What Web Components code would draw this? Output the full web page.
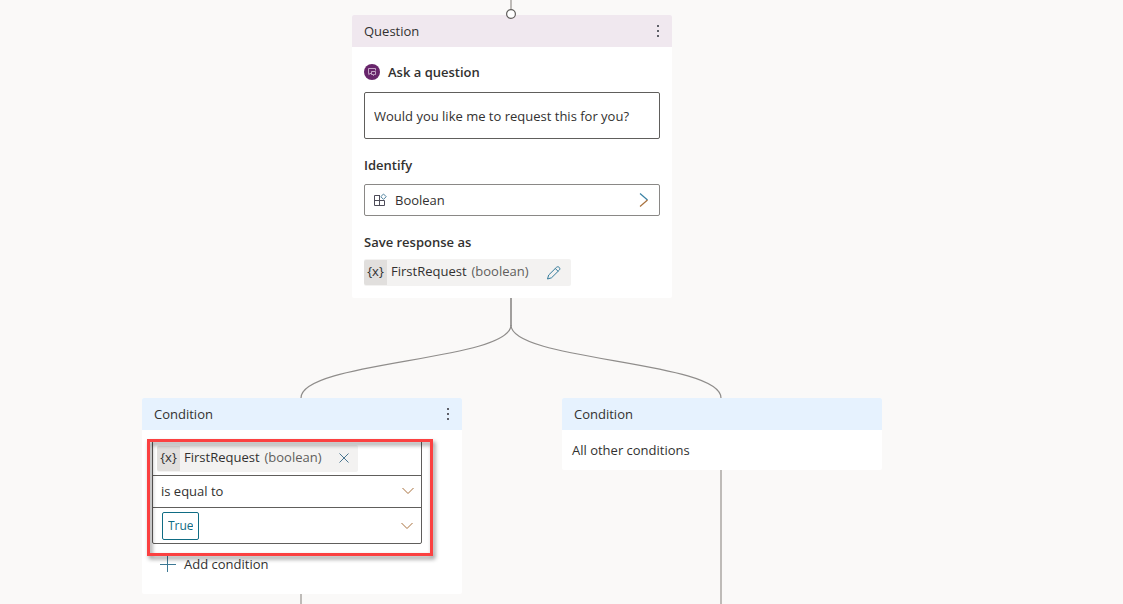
<!DOCTYPE html>
<html lang="en">
<head>
<meta charset="utf-8">
<title>Conversation flow</title>
<style>
body{margin:0;background:#faf9f8;color:#323130;font:13px/20px "Open Sans","Noto Sans",sans-serif}
</style>
</head>
<body>
<flow-canvas></flow-canvas>
<script>
const define=(name,html)=>{
  const t=document.createElement('template');
  t.innerHTML=html;
  customElements.define(name,class extends HTMLElement{
    constructor(){
      super();
      this.attachShadow({mode:'open'}).append(t.content.cloneNode(true));
    }
  });
};

define('flow-node',`
<style>
:host{display:block;width:320px;flex:none;position:relative;background:#fff;border-radius:2px}
header{display:flex;align-items:center;justify-content:space-between;height:32px;padding:0 12px;background:var(--head,#e6f2fe);border-radius:2px 2px 0 0}
h2{margin:0;font:inherit}
button{display:none;width:16px;height:20px;margin-right:-6px;padding:0;border:0;background:none;color:#5f6068}
:host([menu]) button{display:grid;place-items:center}
</style>
<header><h2><slot name="title"></slot></h2>
<button aria-label="More options"><svg width="4" height="14" viewBox="0 0 4 14" fill="currentColor"><rect x="1" y="1" width="2" height="2"/><rect x="1" y="6" width="2" height="2"/><rect x="1" y="11" width="2" height="2"/></svg></button></header>
<slot></slot>`);

define('variable-chip',`
<style>
:host{display:inline-flex;align-items:center;height:27px;background:#f3f2f1;border-radius:2px;vertical-align:top}
.x{box-sizing:border-box;width:23px;height:25px;padding-top:1px;text-align:center;background:#e1dfdd;border-radius:2px 0 0 2px;margin-right:4px}
.name,.type{padding-bottom:3px}
.type{color:#605e5c;margin-left:5px}
::slotted(button){display:grid;place-items:center;width:16px;height:20px;padding:0;border:0;background:none;margin:0 9px 0 17px}
:host([compact]) ::slotted(button){margin:0 6px 0 14px}
</style>
<span class="x">{x}</span><span class="name"><slot></slot></span><span class="type">(boolean)</span><slot name="action"></slot>`);

define('chevron-icon',`
<style>:host{display:block;width:12px;height:12px;pointer-events:none}svg{display:block}</style>
<svg width="12" height="12" viewBox="0 0 12 12" fill="none" stroke="#a8713d"><path d="M.5 3 6 8.5 11.5 3"/></svg>`);

define('question-form',`
<style>
:host{display:block;padding:15px 12px 12px}
label,.label{display:flex;align-items:center;height:20px;gap:8px;font-weight:600}
input{box-sizing:border-box;display:block;width:100%;height:47px;margin:10px 0 16px;padding:0 9px;border:1px solid #605e5c;border-radius:2px;font:inherit;color:inherit;background:#fff}
.pick{box-sizing:border-box;display:flex;align-items:center;width:100%;height:32px;margin:9px 0 16px;padding:0 9px 0 8px;border:1px solid #8a8886;border-radius:2px;font:inherit;color:inherit;background:#fff;text-align:left;gap:8px}
.pick span{flex:1}
variable-chip{margin-top:7px}
svg{display:block}
</style>
<label for="question"><svg width="16" height="16" viewBox="0 0 16 16" fill="none"><circle cx="8" cy="8" r="8" fill="#68256b"/><path d="M7 9.5H6L4.8 10.6V9.5H4.5v-5h7v2M7.500 7.500h4v3h-1L9.500 11.500V10.500h-2Z" stroke="#dcc6dd" stroke-width=".8"/></svg>Ask a question</label>
<input id="question" value="Would you like me to request this for you?">
<label for="entity">Identify</label>
<button class="pick" id="entity"><svg width="14" height="14" viewBox="0 0 14 14" fill="none"><path d="M7 2.500H1.500v10h10V7.500M1.500 7.500h10M6.500 2.500v10" stroke="#4d4b58"/><path d="m10.500 1 2.700 2.700-2.700 2.700-2.700-2.700Z" fill="#fff" stroke="#4f829f"/></svg><span>Boolean</span><svg width="12" height="16" viewBox="0 0 12 16" fill="none"><path d="m2 1.500 7.500 6.500" stroke="#3982a5" stroke-width="1.200"/><path d="m9.500 8-7.500 6.500" stroke="#a8713d" stroke-width="1.200"/></svg></button>
<div class="label">Save response as</div>
<variable-chip>FirstRequest<button slot="action" aria-label="Edit variable"><svg width="16" height="16" viewBox="0 0 16 16" fill="none" stroke="#347b9b"><path d="m1.500 14 1.200-4 7.800-7.700c1.800-1.700 4.500 1 2.800 2.800l-7.800 7.700ZM9.300 3.500l2.800 2.800"/></svg></button></variable-chip>`);

define('condition-form',`
<style>
:host{display:block;padding:10px 40px 20px 10px}
.group{border:1px solid #605e5c;border-radius:2px}
.row{position:relative;display:flex;align-items:center;height:31px}
.row+.row{border-top:1px solid #605e5c}
.first{height:34px;padding-left:4px}
.last{height:35px;justify-content:space-between;padding:0 8px 0 9px}
select{appearance:none;font:inherit;color:inherit;background:none;border:0;border-radius:2px;box-sizing:border-box}
.op{width:100%;height:31px;padding:0 8px 2px}
.row>chevron-icon.over{position:absolute;right:7px;top:9px}
.value{width:37px;height:28px;border:1px solid #0f6c84;color:#0f6c84;padding:0 5px;font-size:12px}
.add{display:flex;align-items:center;gap:8px;height:20px;margin:10px 0 0 8px;padding:0;border:0;background:none;font:inherit;color:inherit}
.mark{position:absolute;left:5px;top:41px;width:286px;height:117px;box-sizing:border-box;border:3px solid #fb4141;filter:drop-shadow(2px 3px 2px rgba(0,0,0,.45));pointer-events:none}
</style>
<div class="group">
<div class="row first"><variable-chip compact>FirstRequest<button slot="action" aria-label="Remove variable"><svg width="12" height="12" viewBox="0 0 12 12" stroke="#4a7690"><path d="m1.500 1.500 9 9m0-9-9 9"/></svg></button></variable-chip></div>
<div class="row"><select class="op" aria-label="Operator"><option>is equal to</option><option>is not equal to</option></select><chevron-icon class="over"></chevron-icon></div>
<div class="row last"><select class="value" aria-label="Value"><option>True</option><option>False</option></select><chevron-icon></chevron-icon></div>
</div>
<button class="add"><svg width="16" height="16" viewBox="0 0 16 16" stroke="#3c7894"><path d="M0 8.500h16M7.500 0v16"/></svg>Add condition</button>
<div class="mark"></div>`);

define('flow-canvas',`
<style>
:host{display:flex;flex-direction:column;align-items:center;box-sizing:border-box;min-height:100vh;padding-right:99px}
.chart{display:flex;flex-direction:column;align-items:center;flex:1;width:740px}
.entry{position:relative;width:2px;height:15px;background:#bebbb8;margin-right:2px}
.entry svg{position:absolute;left:-4px;top:9px;z-index:1}
.branches{display:block}
.row{display:flex;gap:100px;flex:1}
.col{display:flex;flex-direction:column;align-items:center}
.line{flex:1;width:2px;background:#bebbb8;margin-right:2px}
.other{margin:0;padding:10px;height:20px}
</style>
<div class="chart">
<div class="entry"><svg width="10" height="10" viewBox="0 0 10 10"><circle cx="5" cy="5" r="4.400" fill="#fff" stroke="#605e5c" stroke-width="1.200"/></svg></div>
<flow-node menu style="--head:#f0e8ef"><span slot="title">Question</span><question-form></question-form></flow-node>
<svg class="branches" width="740" height="100" viewBox="0 0 740 100" fill="none" stroke="#8f8d8b"><path d="M369 0v28" stroke="#a19f9d" stroke-width="2"/><path d="M369 27C369 63 159 63 159 100M369 27C369 63 579 63 579 100" stroke-width="1.200"/></svg>
<div class="row">
<div class="col"><flow-node menu><span slot="title">Condition</span><condition-form></condition-form></flow-node><div class="line"></div></div>
<div class="col"><flow-node><span slot="title">Condition</span><p class="other">All other conditions</p></flow-node><div class="line"></div></div>
</div>
</div>`);
</script>
</body>
</html>
